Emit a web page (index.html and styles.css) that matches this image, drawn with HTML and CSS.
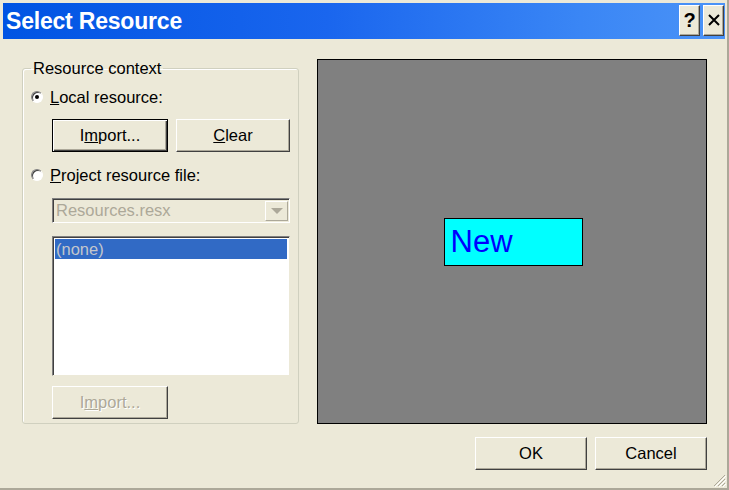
FILE: index.html
```html
<!DOCTYPE html>
<html lang="en">
<head>
  <meta charset="UTF-8" />
  <title>Select Resource</title>
  <link rel="stylesheet" href="styles.css">
</head>
<body>
  <div class="window">
    <div class="titlebar">
      <span class="title">Select Resource</span>
      <div class="title-btns">
        <button class="tb-btn">?</button>
        <button class="tb-btn close">
          <svg width="12" height="12" viewBox="0 0 12 12"><path d="M1 1 L11 11 M11 1 L1 11" stroke="#000" stroke-width="2"/></svg>
        </button>
      </div>
    </div>

    <div class="main">
      <fieldset class="group">
        <legend>Resource context</legend>
        <div class="radio-row first">
          <span class="radio checked"></span>
          <span><u>L</u>ocal resource:</span>
        </div>
        <div class="indent btn-row">
          <button class="btn default">I<u>m</u>port...</button>
          <button class="btn clear"><u>C</u>lear</button>
        </div>
        <div class="radio-row">
          <span class="radio"></span>
          <span><u>P</u>roject resource file:</span>
        </div>
        <div class="indent">
          <div class="combo">
            <span>Resources.resx</span>
            <span class="combo-arrow"><span class="tri"></span></span>
          </div>
          <div class="list">
            <div class="list-item selected">(none)</div>
          </div>
          <button class="btn disabled">I<u>m</u>port...</button>
        </div>
      </fieldset>

      <div class="preview">
        <div class="new-box">New</div>
      </div>
    </div>

    <div class="footer">
      <button class="btn ok">OK</button>
      <button class="btn cancel">Cancel</button>
    </div>

    <!-- size grip -->
    <svg class="grip" width="14" height="14" viewBox="0 0 14 14">
      <path d="M13 2 L2 13 M13 6 L6 13 M13 10 L10 13" stroke="#aca899" stroke-width="1"/>
      <path d="M14 3 L3 14 M14 7 L7 14 M14 11 L11 14" stroke="#fff" stroke-width="1"/>
    </svg>
  </div>
</body>
</html>
```

FILE: styles.css
```css
body {
  margin: 0;
  background: #ece9d8;
  font-family: "Liberation Sans", Arial, sans-serif;
  font-size: 16.5px;
  color: #000;
  overflow: hidden;
}

.window {
  position: relative;
  width: 729px;
  height: 490px;
  box-sizing: border-box;
  padding: 3px 4px 3px 3px;
  background: #ece9d8;
  box-shadow: inset -2px -2px #aca899;
}

.titlebar {
  height: 36px;
  display: flex;
  align-items: center;
  justify-content: space-between;
  padding: 0 1px 0 3px;
  background: linear-gradient(to right, #0054e3, #1a66ee 45%, #3a86f5 80%, #4b93f7);
}

.title {
  color: #fff;
  font-weight: bold;
  font-size: 23px;
  letter-spacing: -0.2px;
}

.title-btns {
  display: flex;
  gap: 3px;
  margin-bottom: 2px;
}

.tb-btn {
  width: 21px;
  height: 31px;
  padding: 0;
  background: #ece9d8;
  border: 1px solid;
  border-color: #fff #404040 #404040 #fff;
  box-shadow: inset -1px -1px #aca899;
  font-family: "Liberation Sans", Arial, sans-serif;
  font-weight: bold;
  font-size: 20px;
  line-height: 1;
  display: flex;
  align-items: center;
  justify-content: center;
}

.main {
  display: flex;
  align-items: flex-start;
  gap: 18px;
  padding: 20px 18px 0 19px;
}

.group {
  width: 276px;
  height: 365px;
  box-sizing: border-box;
  margin: 0;
  padding: 0 8px 4px 8px;
  border: 1px solid #d0d0bf;
  border-radius: 3px;
  box-shadow: inset 1px 1px #fff;
}

.group legend {
  padding: 0 2px;
  line-height: 18px;
}

.radio-row {
  display: flex;
  align-items: center;
  gap: 7px;
  height: 18px;
  margin-top: 14px;
}

.radio-row.first {
  margin-top: 11px;
}

.radio {
  width: 12px;
  height: 12px;
  box-sizing: border-box;
  border-radius: 50%;
  background: #fff;
  border: 1px solid;
  border-color: #808080 #fff #fff #808080;
  box-shadow: inset 1px 1px #404040;
  display: flex;
  align-items: center;
  justify-content: center;
}

.radio.checked::after {
  content: "";
  width: 4px;
  height: 4px;
  border-radius: 50%;
  background: #000;
}

.indent {
  margin-left: 21px;
}

.btn-row {
  display: flex;
  gap: 8px;
  margin-top: 13px;
}

.btn {
  height: 33px;
  box-sizing: border-box;
  padding: 0;
  background: #ece9d8;
  border: 1px solid;
  border-color: #fff #404040 #404040 #fff;
  box-shadow: inset -1px -1px #aca899;
  font-family: "Liberation Sans", Arial, sans-serif;
  font-size: 16.5px;
  color: #000;
}

.btn.default {
  width: 116px;
  border: 1px solid #000;
  box-shadow: inset 1px 1px #fff, inset -1px -1px #404040, inset -2px -2px #aca899;
}

.btn.clear {
  width: 114px;
}

.btn.disabled {
  width: 116px;
  margin-top: 10px;
  color: #aca899;
  text-shadow: 1px 1px #fff;
}

.combo {
  height: 25px;
  margin-top: 14px;
  box-sizing: border-box;
  display: flex;
  align-items: center;
  justify-content: space-between;
  padding: 0 1px 0 3px;
  border: 1px solid;
  border-color: #808080 #fff #fff #808080;
  box-shadow: inset 1px 1px #404040;
  color: #aca899;
}

.combo-arrow {
  width: 23px;
  height: 20px;
  box-sizing: border-box;
  background: #ece9d8;
  border: 1px solid;
  border-color: #fff #aca899 #aca899 #fff;
  display: flex;
  align-items: center;
  justify-content: center;
}

.tri {
  width: 0;
  height: 0;
  border-left: 6px solid transparent;
  border-right: 6px solid transparent;
  border-top: 6px solid #aca899;
}

.list {
  height: 140px;
  margin-top: 13px;
  box-sizing: border-box;
  padding: 2px;
  background: #fff;
  border: 1px solid;
  border-color: #808080 #ece9d8 #ece9d8 #808080;
  box-shadow: inset 1px 1px #404040;
}

.list-item {
  height: 20px;
  line-height: 20px;
  padding-left: 1px;
}

.list-item.selected {
  background: #316ac5;
  color: #c3c6cc;
}

.preview {
  width: 391px;
  height: 365px;
  box-sizing: border-box;
  background: #808080;
  border: 1px solid #000;
  display: flex;
  align-items: center;
  justify-content: center;
}

.new-box {
  width: 139px;
  height: 48px;
  box-sizing: border-box;
  background: #00ffff;
  border: 1px solid #000;
  color: #0000ff;
  font-size: 31px;
  line-height: 46px;
  padding-left: 6px;
  margin-left: 2px;
}

.footer {
  display: flex;
  justify-content: flex-end;
  gap: 8px;
  padding: 13px 18px 0 0;
}

.btn.ok {
  width: 112px;
}

.btn.cancel {
  width: 112px;
}

.grip {
  position: absolute;
  right: 3px;
  bottom: 3px;
}
```
